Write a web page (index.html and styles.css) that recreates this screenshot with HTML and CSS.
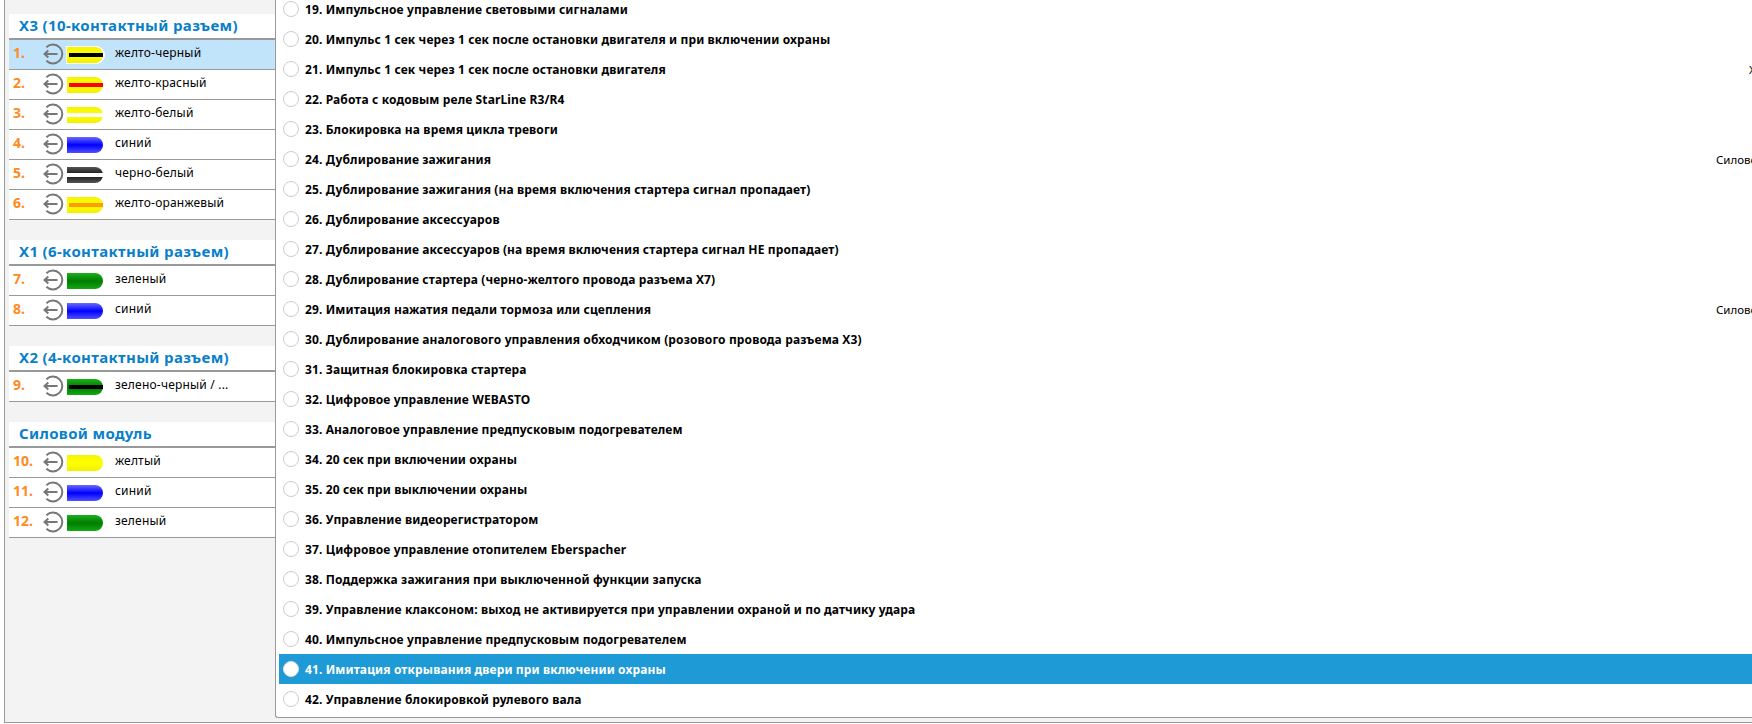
FILE: index.html
```html
<!DOCTYPE html>
<html lang="ru">
<head>
  <meta charset="UTF-8">
  <title>Настройка выходов</title>
  <link rel="stylesheet" href="styles.css">
</head>
<body>
  <svg class="sprite" width="0" height="0">
    <symbol id="pin" viewBox="0 0 22 22">
      <path d="M4.4 4.2A9.4 9.4 0 1 1 4.4 17.8" fill="none" stroke="#777" stroke-width="2"/>
      <path d="M15.5 11H2.5M6.3 7.4 2.5 11l3.8 3.6" fill="none" stroke="#777" stroke-width="2"/>
    </symbol>
  </svg>

  <div class="app">
    <aside class="wires">
      <h2 class="wires__title">X3 (10-контактный разъем)</h2>
      <ul class="wires__list">
        <li class="wire wire--active"><b class="wire__num">1.</b><svg class="wire__pin"><use href="#pin"/></svg><span class="cable cable--yellow cable--glow"><i class="cable__line cable__line--black"></i></span><span class="wire__name">желто-черный</span></li>
        <li class="wire"><b class="wire__num">2.</b><svg class="wire__pin"><use href="#pin"/></svg><span class="cable cable--yellow"><i class="cable__line cable__line--red"></i></span><span class="wire__name">желто-красный</span></li>
        <li class="wire"><b class="wire__num">3.</b><svg class="wire__pin"><use href="#pin"/></svg><span class="cable cable--yellow"><i class="cable__line cable__line--white"></i></span><span class="wire__name">желто-белый</span></li>
        <li class="wire"><b class="wire__num">4.</b><svg class="wire__pin"><use href="#pin"/></svg><span class="cable cable--blue"></span><span class="wire__name">синий</span></li>
        <li class="wire"><b class="wire__num">5.</b><svg class="wire__pin"><use href="#pin"/></svg><span class="cable cable--black"><i class="cable__line cable__line--white"></i></span><span class="wire__name">черно-белый</span></li>
        <li class="wire"><b class="wire__num">6.</b><svg class="wire__pin"><use href="#pin"/></svg><span class="cable cable--yellow"><i class="cable__line cable__line--orange"></i></span><span class="wire__name">желто-оранжевый</span></li>
      </ul>

      <h2 class="wires__title">X1 (6-контактный разъем)</h2>
      <ul class="wires__list">
        <li class="wire"><b class="wire__num">7.</b><svg class="wire__pin"><use href="#pin"/></svg><span class="cable cable--green"></span><span class="wire__name">зеленый</span></li>
        <li class="wire"><b class="wire__num">8.</b><svg class="wire__pin"><use href="#pin"/></svg><span class="cable cable--blue"></span><span class="wire__name">синий</span></li>
      </ul>

      <h2 class="wires__title">X2 (4-контактный разъем)</h2>
      <ul class="wires__list">
        <li class="wire"><b class="wire__num">9.</b><svg class="wire__pin"><use href="#pin"/></svg><span class="cable cable--green"><i class="cable__line cable__line--black"></i></span><span class="wire__name">зелено-черный / ...</span></li>
      </ul>

      <h2 class="wires__title">Силовой модуль</h2>
      <ul class="wires__list">
        <li class="wire"><b class="wire__num">10.</b><svg class="wire__pin"><use href="#pin"/></svg><span class="cable cable--yellow"></span><span class="wire__name">желтый</span></li>
        <li class="wire"><b class="wire__num">11.</b><svg class="wire__pin"><use href="#pin"/></svg><span class="cable cable--blue"></span><span class="wire__name">синий</span></li>
        <li class="wire"><b class="wire__num">12.</b><svg class="wire__pin"><use href="#pin"/></svg><span class="cable cable--green"></span><span class="wire__name">зеленый</span></li>
      </ul>
    </aside>

    <main class="functions">
      <ul class="functions__list">
        <li class="func"><i class="func__radio"></i><b class="func__name">19. Импульсное управление световыми сигналами</b></li>
        <li class="func"><i class="func__radio"></i><b class="func__name">20. Импульс 1 сек через 1 сек после остановки двигателя и при включении охраны</b></li>
        <li class="func"><i class="func__radio"></i><b class="func__name">21. Импульс 1 сек через 1 сек после остановки двигателя</b><span class="func__note func__note--far">Х3</span></li>
        <li class="func"><i class="func__radio"></i><b class="func__name">22. Работа с кодовым реле StarLine R3/R4</b></li>
        <li class="func"><i class="func__radio"></i><b class="func__name">23. Блокировка на время цикла тревоги</b></li>
        <li class="func"><i class="func__radio"></i><b class="func__name">24. Дублирование зажигания</b><span class="func__note">Силовой</span></li>
        <li class="func"><i class="func__radio"></i><b class="func__name">25. Дублирование зажигания (на время включения стартера сигнал пропадает)</b></li>
        <li class="func"><i class="func__radio"></i><b class="func__name">26. Дублирование аксессуаров</b></li>
        <li class="func"><i class="func__radio"></i><b class="func__name">27. Дублирование аксессуаров (на время включения стартера сигнал НЕ пропадает)</b></li>
        <li class="func"><i class="func__radio"></i><b class="func__name">28. Дублирование стартера (черно-желтого провода разъема Х7)</b></li>
        <li class="func"><i class="func__radio"></i><b class="func__name">29. Имитация нажатия педали тормоза или сцепления</b><span class="func__note">Силовой</span></li>
        <li class="func"><i class="func__radio"></i><b class="func__name">30. Дублирование аналогового управления обходчиком (розового провода разъема Х3)</b></li>
        <li class="func"><i class="func__radio"></i><b class="func__name">31. Защитная блокировка стартера</b></li>
        <li class="func"><i class="func__radio"></i><b class="func__name">32. Цифровое управление WEBASTO</b></li>
        <li class="func"><i class="func__radio"></i><b class="func__name">33. Аналоговое управление предпусковым подогревателем</b></li>
        <li class="func"><i class="func__radio"></i><b class="func__name">34. 20 сек при включении охраны</b></li>
        <li class="func"><i class="func__radio"></i><b class="func__name">35. 20 сек при выключении охраны</b></li>
        <li class="func"><i class="func__radio"></i><b class="func__name">36. Управление видеорегистратором</b></li>
        <li class="func"><i class="func__radio"></i><b class="func__name">37. Цифровое управление отопителем Eberspacher</b></li>
        <li class="func"><i class="func__radio"></i><b class="func__name">38. Поддержка зажигания при выключенной функции запуска</b></li>
        <li class="func"><i class="func__radio"></i><b class="func__name">39. Управление клаксоном: выход не активируется при управлении охраной и по датчику удара</b></li>
        <li class="func"><i class="func__radio"></i><b class="func__name">40. Импульсное управление предпусковым подогревателем</b></li>
        <li class="func func--active"><i class="func__radio"></i><b class="func__name">41. Имитация открывания двери при включении охраны</b></li>
        <li class="func"><i class="func__radio"></i><b class="func__name">42. Управление блокировкой рулевого вала</b></li>
      </ul>
    </main>
  </div>
</body>
</html>
```

FILE: styles.css
```css
html, body {
  margin: 0;
  height: 100%;
  overflow: hidden;
  background: #fff;
}
body {
  font-family: "Noto Sans", sans-serif;
  font-size: 12px;
  color: #000;
}
ul {
  list-style: none;
  margin: 0;
  padding: 0;
}
.sprite {
  display: block;
  height: 0;
}

.app {
  box-sizing: border-box;
  display: flex;
  align-items: flex-start;
  width: 1900px;
  height: 723px;
  margin-left: 4px;
  border-left: 1px solid #999;
  border-bottom: 1px solid #999;
  background: #f3f3f3;
}

/* left column */
.wires {
  box-sizing: border-box;
  flex: none;
  width: 270px;
  padding: 14px 0 0 4px;
}
.wires__title {
  height: 24px;
  margin: 0;
  padding-left: 10px;
  background: #fff;
  border-bottom: 2px solid #999;
  color: #0a7fc9;
  font-size: 15px;
  line-height: 22px;
  letter-spacing: 0.35px;
  font-weight: bold;
  white-space: nowrap;
}
.wires__list {
  margin-bottom: 20px;
}
.wire {
  display: flex;
  height: 29px;
  background: #fff;
  border-bottom: 1px solid #999;
  overflow: hidden;
}
.wire--active {
  background: #c2e4fb;
}
.wire__num {
  flex: none;
  width: 33px;
  padding: 3px 0 0 4px;
  box-sizing: border-box;
  color: #ff8a22;
  font-size: 14px;
}
.wire__pin {
  flex: none;
  width: 22px;
  height: 22px;
  margin: 3px 3px 0 0;
}
.cable {
  position: relative;
  flex: none;
  width: 36px;
  height: 16px;
  margin-top: 7px;
  border-radius: 0 8px 8px 0;
}
.cable--yellow { background: linear-gradient(#f4f400, #ffff00 50%, #f0f000); }
.cable--blue { background: linear-gradient(#6a6aff, #0000ff 50%, #5050ff); }
.cable--black { background: linear-gradient(#555, #111 50%, #555); }
.cable--green { background: linear-gradient(#1cb01c, #007c00 50%, #12a812); }
.cable--glow {
  box-shadow: 0 0 0 1px #fff, 1px 0 0 1px #fff;
}
.cable__line {
  position: absolute;
  left: 2px;
  right: 0;
  top: 6px;
  height: 4px;
}
.cable__line--black { background: #000; }
.cable__line--red { background: #ff0000; }
.cable__line--white { left: 0; background: #fff; }
.cable__line--orange { background: #ff9c00; }
.wire__name {
  margin-left: 12px;
  padding-top: 4px;
  letter-spacing: 0.2px;
  white-space: nowrap;
}

/* right column */
.functions {
  box-sizing: border-box;
  flex: 1;
  height: 718px;
  overflow: hidden;
  background: #fff;
  border-left: 1px solid #999;
  border-bottom: 1px solid #999;
  border-bottom-left-radius: 3px;
}
.functions__list {
  margin: -6px 0 0 3px;
}
.func {
  display: flex;
  align-items: center;
  height: 30px;
}
.func--active {
  background: #1e9ad6;
  color: #fff;
}
.func__radio {
  flex: none;
  box-sizing: border-box;
  width: 16px;
  height: 16px;
  margin: 0 6px 0 4px;
  border: 1px solid #ccc;
  border-radius: 50%;
  background: #fff;
}
.func--active .func__radio {
  border-color: #e4e4e4;
}
.func__name {
  flex: none;
  width: 1411px;
  letter-spacing: 0.12px;
  white-space: nowrap;
}
.func__note {
  font-size: 11.5px;
  white-space: nowrap;
}
.func__note--far {
  margin-left: 33px;
}
```
